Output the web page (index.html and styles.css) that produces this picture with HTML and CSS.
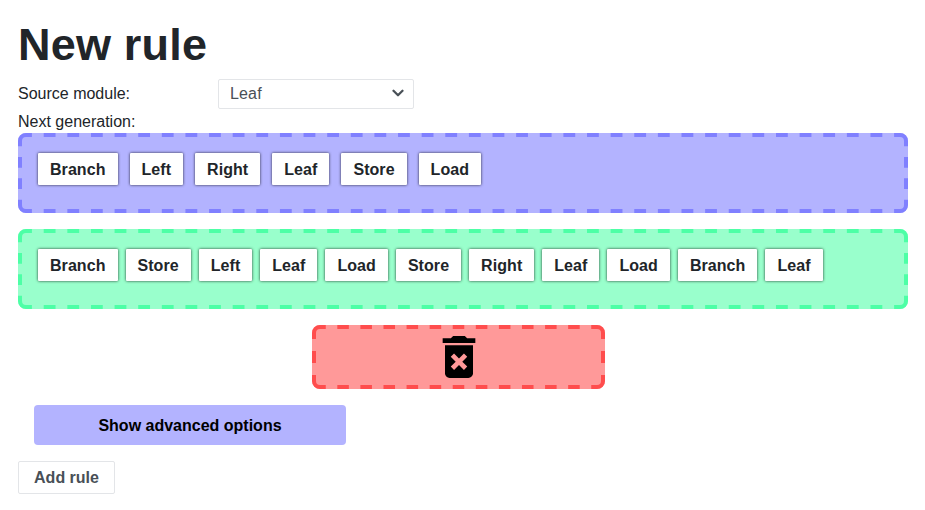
FILE: index.html
```html
<!DOCTYPE html>
<html lang="en">
<head>
<meta charset="utf-8">
<title>New rule</title>
<link rel="stylesheet" href="styles.css">
</head>
<body>
<main class="page">
  <h1 class="title">New rule</h1>
  <div class="field">
    <span class="field-label">Source module:</span>
    <div class="select">
      <span>Leaf</span>
      <svg class="chevron" viewBox="0 0 16 16"><path d="M2 5l6 6 6-6" fill="none" stroke="#495057" stroke-width="3" stroke-linecap="round" stroke-linejoin="round"/></svg>
    </div>
  </div>
  <div class="caption">Next generation:</div>
  <div class="zone zone-source">
    <svg class="outline" viewBox="0 0 890 80">
      <path d="M2 8a6 6 0 0 1 6-6M882 2a6 6 0 0 1 6 6M888 72a6 6 0 0 1-6 6M8 78a6 6 0 0 1-6-6"/>
      <path class="dash-wide" d="M8 2H882M8 78H882"/>
      <path class="dash-tall" d="M2 8V72M888 8V72"/>
    </svg>
    <span class="chip">Branch</span>
    <span class="chip">Left</span>
    <span class="chip">Right</span>
    <span class="chip">Leaf</span>
    <span class="chip">Store</span>
    <span class="chip">Load</span>
  </div>
  <div class="zone zone-result">
    <svg class="outline" viewBox="0 0 890 80">
      <path d="M2 8a6 6 0 0 1 6-6M882 2a6 6 0 0 1 6 6M888 72a6 6 0 0 1-6 6M8 78a6 6 0 0 1-6-6"/>
      <path class="dash-wide" d="M8 2H882M8 78H882"/>
      <path class="dash-tall" d="M2 8V72M888 8V72"/>
    </svg>
    <span class="chip">Branch</span>
    <span class="chip">Store</span>
    <span class="chip">Left</span>
    <span class="chip">Leaf</span>
    <span class="chip">Load</span>
    <span class="chip">Store</span>
    <span class="chip">Right</span>
    <span class="chip">Leaf</span>
    <span class="chip">Load</span>
    <span class="chip">Branch</span>
    <span class="chip">Leaf</span>
  </div>
  <div class="trash">
    <svg class="outline" viewBox="0 0 293 64">
      <path d="M2 8a6 6 0 0 1 6-6M285 2a6 6 0 0 1 6 6M291 56a6 6 0 0 1-6 6M8 62a6 6 0 0 1-6-6"/>
      <path class="dash-trash-wide" d="M8 2H285M8 62H285"/>
      <path class="dash-trash-tall" d="M2 8V56M291 8V56"/>
    </svg>
    <svg class="trash-icon" viewBox="0 0 24 24"><path d="M6 19c0 1.1.9 2 2 2h8c1.1 0 2-.9 2-2V7H6v12zm2.46-7.12l1.41-1.41L12 12.59l2.12-2.12 1.41 1.41L13.41 14l2.12 2.12-1.41 1.41L12 15.41l-2.12 2.12-1.41-1.41L10.59 14l-2.13-2.12zM15.5 4l-1-1h-5l-1 1H5v2h14V4z"/></svg>
  </div>
  <button class="advanced">Show advanced options</button>
  <button class="add">Add rule</button>
</main>
</body>
</html>
```
FILE: styles.css
```css
* { box-sizing: border-box; }
body {
  margin: 0;
  background: #fff;
  color: #212529;
  font: 16px/24px "Liberation Sans", Arial, sans-serif;
}
.page {
  display: flex;
  flex-direction: column;
  padding: 18px 17px 16px 18px;
}
.title {
  margin: 0 0 7px;
  font-size: 45px;
  line-height: 54px;
  font-weight: 700;
  letter-spacing: 0.2px;
}
.field {
  display: flex;
  align-items: center;
  height: 30px;
}
.field-label { width: 200px; }
.select {
  display: flex;
  align-items: center;
  justify-content: space-between;
  width: 196px;
  height: 30px;
  padding: 0 9px 0 11px;
  border: 1px solid #e3e5e8;
  border-radius: 2px;
  color: #495057;
  letter-spacing: 0.15px;
}
.chevron {
  width: 12px;
  height: 12px;
  margin-bottom: 2px;
}
.caption {
  height: 24px;
  line-height: 26px;
}
.zone {
  position: relative;
  display: flex;
  align-items: flex-start;
  height: 80px;
  margin-bottom: 16px;
  padding: 20px;
  border-radius: 8px;
}
.zone-source {
  gap: 12px;
  background: #b3b3ff;
  color: #8080ff;
}
.zone-result {
  gap: 8px;
  background: #99ffcc;
  color: #4dffa6;
}
.outline {
  position: absolute;
  inset: 0;
  width: 100%;
  height: 100%;
  fill: none;
  stroke: currentColor;
  stroke-width: 4px;
}
.dash-wide {
  stroke-dasharray: 11.811px;
  stroke-dashoffset: 5.905px;
}
.dash-tall {
  stroke-dasharray: 10.667px;
  stroke-dashoffset: 5.333px;
}
.dash-trash-wide {
  stroke-dasharray: 11.542px;
  stroke-dashoffset: 5.771px;
}
.dash-trash-tall {
  stroke-dasharray: 12px;
  stroke-dashoffset: 6px;
}
.chip {
  height: 32px;
  padding: 0 12px;
  border-radius: 1px;
  background: #fff;
  box-shadow: 0 0 3px rgba(0, 0, 0, 0.8);
  color: #212529;
  font-weight: 700;
  line-height: 34px;
  letter-spacing: 0.06px;
}
.trash {
  position: relative;
  display: flex;
  justify-content: center;
  align-items: center;
  align-self: flex-start;
  width: 293px;
  height: 64px;
  margin: 0 0 16px 294px;
  background: #ff9999;
  color: #ff4d4d;
  border-radius: 8px;
}
.trash-icon {
  width: 56px;
  height: 56px;
  fill: #000;
}
.advanced,
.add {
  align-self: flex-start;
  padding: 0;
  font: inherit;
  font-weight: 700;
}
.advanced {
  width: 312px;
  height: 40px;
  margin: 0 0 16px 16px;
  padding-top: 2px;
  border: 0;
  border-radius: 4px;
  background: #b3b3ff;
  color: #000;
}
.add {
  width: 97px;
  height: 33px;
  border: 1px solid #e3e5e8;
  border-radius: 2px;
  background: #fff;
  color: #495057;
}
```
